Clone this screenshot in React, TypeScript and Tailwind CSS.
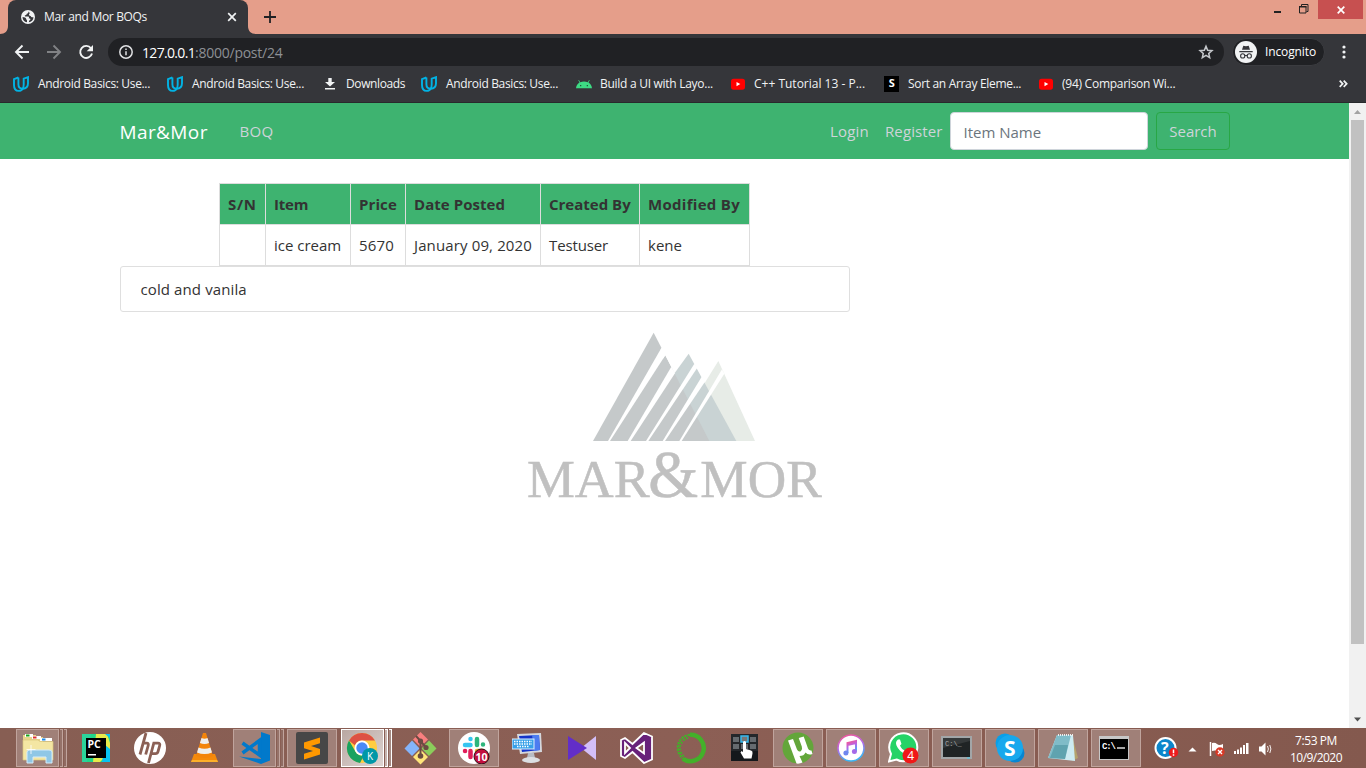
import type { ReactNode } from "react";

const Udacity = () => (
  <svg className="-ml-px" width="16" height="16" viewBox="0 0 16 16" fill="none" stroke="#02b3e4" strokeWidth="1.900">
    <path d="M5.400 1.500 1 3.200V9c0 3.700 1.800 5.900 4.600 5.900 2.200 0 3.700-1.200 4.300-2.800" />
    <path d="M5.400 1.500v6.700c0 2.900 1.500 4.500 4.200 4.500 3.400 0 5.400-2.200 5.400-5.500V1.200l-4.300 1.500v5.800c0 2.200-.4 3.500-1.100 4.200" />
  </svg>
);

const Download = () => (
  <svg width="16" height="16" viewBox="0 0 16 16" fill="#f1f3f4">
    <path d="M6.300 2h3.400v4H13L8 10.600 3 6h3.300zM3 12h10v1.600H3z" />
  </svg>
);

const Android = () => (
  <svg width="16" height="16" viewBox="0 0 16 16">
    <path d="M0 12.300c.3-2.800 1.700-4.800 3.500-5.800L2.300 4.300l.6-.3 1.300 2.200c2.300-1 5.300-1 7.600 0L13.100 4l.6.300-1.200 2.200c1.800 1 3.200 3 3.500 5.800z" fill="#3ddc84" />
    <path d="M4 9h1.300v1.300H4zM10.700 9H12v1.300h-1.300z" fill="#205c3c" />
  </svg>
);

const Youtube = () => (
  <svg width="16" height="16" viewBox="0 0 16 16">
    <rect x="1" y="2.700" width="14" height="11" rx="2.600" fill="#f00" />
    <path d="M6.500 5.900v4.400l3.800-2.200z" fill="#fff" />
  </svg>
);

const SBox = () => (
  <span className="flex h-[16px] w-[15px] items-center justify-center bg-black text-[11px] font-bold text-white">S</span>
);

const bookmarks: { icon: ReactNode; text: string; cls: string }[] = [
  { icon: <Udacity />, text: "Android Basics: Use...", cls: "w-[154px] tracking-[-0.34px]" },
  { icon: <Udacity />, text: "Android Basics: Use...", cls: "w-[154px] tracking-[-0.34px]" },
  { icon: <Download />, text: "Downloads", cls: "w-[100px] tracking-[-0.39px]" },
  { icon: <Udacity />, text: "Android Basics: Use...", cls: "w-[154px] tracking-[-0.34px]" },
  { icon: <Android />, text: "Build a UI with Layo...", cls: "w-[154px] tracking-[-0.28px]" },
  { icon: <Youtube />, text: "C++ Tutorial 13 - P...", cls: "w-[154px]" },
  { icon: <SBox />, text: "Sort an Array Eleme...", cls: "w-[154px] tracking-[-0.32px]" },
  { icon: <Youtube />, text: "(94) Comparison Wi...", cls: "w-[154px] tracking-[-0.26px]" },
];

function TitleBar() {
  return (
    <div className="flex h-[34px] shrink-0 items-start bg-[#e59e8a]">
      <svg width="8" height="34" viewBox="0 0 8 34"><path d="M8 26v8H0c5 0 8-3 8-8z" fill="#35363a" /></svg>
      <div className="flex h-[34px] w-[240px] items-center rounded-t-lg bg-[#35363a] pl-[13px] pr-[11px] text-[12px] text-[#f1f3f4]">
        <svg width="14" height="14" viewBox="0 0 14 14">
          <circle cx="7" cy="7" r="7" fill="#f1f3f4" />
          <path d="M7.600 1.500c-.3 1.400-.5 2-1.800 2.200-.2 1.200-1 1.500-2 1.500l.2 1.200h3.300c1 .3.900 1.400.2 1.800l1.500.2c.8.500.3 2-.8 2.100l-.4 1.700c2.600-.2 4.600-2.300 4.700-5-1.700.5-2.500-.3-2.800-1.300-1.300.1-2.100-.8-1.600-1.800.8-.5.900-1.200-.5-2.600zM1.500 7c1.800.1 3.500.5 3.600 1.700.1 1 .8 1 .9 1.700v1.900A5.500 5.500 0 0 1 1.500 7z" fill="#35363a" />
        </svg>
        <span className="ml-[9px] flex-1 tracking-[-0.32px]">Mar and Mor BOQs</span>
        <svg width="10" height="10" viewBox="0 0 10 10" stroke="#f1f3f4" strokeWidth="1.700"><path d="m1.200 1.200 7.600 7.600m0-7.600L1.200 8.800" /></svg>
      </div>
      <svg width="8" height="34" viewBox="0 0 8 34"><path d="M0 26v8h8c-5 0-8-3-8-8z" fill="#35363a" /></svg>
      <svg className="mt-[11px] ml-2" width="12" height="12" viewBox="0 0 12 12" stroke="#202124" strokeWidth="1.800"><path d="M6 0v12M0 6h12" /></svg>
      <div className="flex-1" />
      <svg width="60" height="20" viewBox="0 0 60 20" fill="none">
        <path d="M16 11h7v2h-7z" fill="#222" />
        <path d="M41.500 6.500h6.500v6.500h-6.500zM43.500 6V4.500h6.500v7H48.500" stroke="#222" />
        <path d="M41 6h7.500v1.500H41z" fill="#222" />
      </svg>
      <div className="mr-[3px] flex h-[19px] w-[45px] items-center justify-center bg-[#c75050]">
        <svg width="8" height="8" viewBox="0 0 8 8" stroke="#fff" strokeWidth="1.700"><path d="m.7.7 6.600 6.600m0-6.600L.7 7.300" /></svg>
      </div>
    </div>
  );
}

function Toolbar() {
  return (
    <div className="flex h-9 shrink-0 items-center bg-[#35363a]">
      <svg className="ml-[14px]" width="84" height="18" viewBox="0 0 84 18" fill="none" strokeWidth="1.900">
        <path d="M15 9H2M8.500 2.500 2 9l6.500 6.500" stroke="#f1f3f4" />
        <path d="M33 9h13M39.500 2.500 46 9l-6.500 6.500" stroke="#818285" />
        <path d="M77 5.300A6 6 0 1 0 78 10.500" stroke="#f1f3f4" />
        <path d="M79 2v6.300h-6.300z" fill="#f1f3f4" />
      </svg>
      <div className="ml-[10px] flex h-7 w-[1116px] items-center rounded-full bg-[#202124] pl-[11px] pr-[10px] text-[14px] text-white">
        <svg width="14" height="14" viewBox="0 0 14 14" fill="none" stroke="#e0e1e3" strokeWidth="1.500">
          <circle cx="7" cy="7" r="6.200" /><path d="M7 6.200v4M7 3.500V5" />
        </svg>
        <span className="ml-[9px] tracking-[-0.67px]">127.0.0.1</span>
        <span className="flex-1 tracking-[-0.25px] text-[#8d9095]">:8000/post/24</span>
        <svg width="16" height="16" viewBox="0 0 24 24" fill="none" stroke="#c4c7cb" strokeWidth="2.300"><path d="m12 3.500 2.500 5.900 6.400.6-4.800 4.200 1.400 6.300L12 17.200l-5.500 3.300 1.400-6.300L3.100 10l6.400-.6z" /></svg>
      </div>
      <div className="ml-2 flex h-7 w-[93px] items-center rounded-full border border-[#3b3c40] bg-[#202124] pl-[2px] text-[12px] tracking-[-0.12px] text-white">
        <svg width="22" height="22" viewBox="0 0 22 22">
          <circle cx="11" cy="11" r="11" fill="#f1f3f4" />
          <path d="M7 8.700 8.300 4.700l2.700.5 2.700-.5 1.300 4zM4.300 10h13.400v1.300H4.300z" fill="#35363a" />
          <g fill="none" stroke="#35363a" strokeWidth="1.100"><circle cx="7.700" cy="14.900" r="2.100" /><circle cx="14.300" cy="14.900" r="2.100" /><path d="M9.800 14.500h2.400" /></g>
        </svg>
        <span className="ml-2">Incognito</span>
      </div>
      <svg className="ml-[17px]" width="4" height="14" viewBox="0 0 4 14" fill="#f1f3f4"><circle cx="2" cy="2" r="1.600" /><circle cx="2" cy="7" r="1.600" /><circle cx="2" cy="12" r="1.600" /></svg>
    </div>
  );
}

function Bookmarks() {
  return (
    <div className="flex h-[33px] shrink-0 items-center border-b border-[#28292c] bg-[#35363a] pl-[14px] pb-[5px] text-[12px] text-[#f1f3f4]">
      {bookmarks.map((b, i) => (
        <div key={i} className={`flex shrink-0 items-center whitespace-nowrap ${b.cls}`}>
          <span className="flex w-6 items-center">{b.icon}</span>
          {b.text}
        </div>
      ))}
      <svg className="ml-[147px]" width="9" height="8" viewBox="0 0 9 8" fill="none" stroke="#f1f3f4" strokeWidth="1.700"><path d="m.7.700 3 3.100-3 3.100M4.700.700l3 3.100-3 3.100" /></svg>
    </div>
  );
}

const columns = [
  { head: "S/N", cell: "", w: "w-[46px]", ht: "tracking-[0.7px]", ct: "" },
  { head: "Item", cell: "ice cream", w: "w-[85px]", ht: "tracking-[-0.2px]", ct: "" },
  { head: "Price", cell: "5670", w: "w-[55px]", ht: "tracking-[0.1px]", ct: "tracking-[0.15px]" },
  { head: "Date Posted", cell: "January 09, 2020", w: "w-[135px]", ht: "tracking-[0.05px]", ct: "tracking-[0.13px]" },
  { head: "Created By", cell: "Testuser", w: "w-[99px]", ht: "", ct: "tracking-[-0.13px]" },
  { head: "Modified By", cell: "kene", w: "w-[110px]", ht: "tracking-[0.3px]", ct: "" },
];

function Logo() {
  return (
    <svg width="330" height="190" viewBox="0 0 990 570">
      <path d="M625 123 735 363H598L540 260z" fill="#e7ece7" />
      <path d="M536 101 679 363H411L492 162z" fill="#c9d3d4" />
      <path d="M431 38 598 363H249z" fill="#c5c9ca" />
      <path d="M454 84 466 106 300 363H294z" fill="#fff" />
      <path d="M484 140 495 160 362 363H353z" fill="#fff" />
      <path d="M553 131 562 143 415 363H408z" fill="#fff" />
      <path d="M576 169 588 181 465 363H458z" fill="#fff" />
      <path d="M636 148 643 161 515 363H508z" fill="#fff" />
      <path d="M454 84 470 80 498 150 484 140 466 106 458 118 452 90z" fill="#fff" />
      <g fill="#c0c0c0" stroke="#c0c0c0" strokeWidth="1.500" fontFamily="'Liberation Serif', serif">
        <text x="51" y="530" fontSize="158" textLength="368" lengthAdjust="spacingAndGlyphs">MAR</text>
        <text x="415" y="531" fontSize="200" textLength="150" lengthAdjust="spacingAndGlyphs">&amp;</text>
        <text x="571" y="530" fontSize="158" textLength="364" lengthAdjust="spacingAndGlyphs">MOR</text>
      </g>
    </svg>
  );
}

function Page() {
  return (
    <div className="flex h-[625px] shrink-0 bg-white">
      <main className="flex w-[1349px] flex-col text-[15px] text-[#333]">
        <nav className="flex h-14 items-center bg-[#3eb370] pl-[119.5px] text-[#ced4da]">
          <span className="w-[120px] pt-0.5 text-[19px] tracking-[0.4px] text-white">Mar&amp;Mor</span>
          <span className="w-[590.5px] tracking-[0.3px]">BOQ</span>
          <span className="w-[55px] tracking-[0.2px]">Login</span>
          <span className="w-[65px] tracking-[0.1px]">Register</span>
          <div className="flex h-[38px] w-[198px] items-center rounded border border-[#ced4da] bg-white pl-[12.5px] pt-0.5 text-[#6c757d]">Item Name</div>
          <div className="ml-2 flex h-[38px] w-[74px] items-center justify-center rounded border border-[#28a745]">Search</div>
        </nav>
        <section className="ml-[120px] mt-6 w-[730px]">
          <table className="ml-[99px] w-[531px] table-fixed border-collapse text-left leading-6">
            <thead>
              <tr className="h-[41px] bg-[#3eb370]">
                {columns.map((c) => (
                  <th key={c.head} className={`whitespace-nowrap border border-[#dddddd] pl-2 font-bold ${c.w} ${c.ht}`}>{c.head}</th>
                ))}
              </tr>
            </thead>
            <tbody>
              <tr className="h-[41px]">
                {columns.map((c) => (
                  <td key={c.head} className={`whitespace-nowrap border border-[#dddddd] pl-2 ${c.ct}`}>{c.cell}</td>
                ))}
              </tr>
            </tbody>
          </table>
          <div className="flex h-[46px] items-center rounded-[3px] border border-[#dfdfdf] pl-[19.5px] tracking-[0.11px]">cold and vanila</div>
        </section>
        <div className="ml-[510px] mt-2"><Logo /></div>
      </main>
      <aside className="flex w-[17px] flex-col items-center bg-[#f1f1f1]">
        <svg width="17" height="17" viewBox="0 0 17 17"><path d="M5 11h7L8.500 7z" fill="#a3a3a3" /></svg>
        <div className="h-[524px] w-[13px] bg-[#c1c1c1]" />
        <div className="flex-1" />
        <svg width="17" height="17" viewBox="0 0 17 17"><path d="M5 6.500h7l-3.500 4z" fill="#505050" /></svg>
      </aside>
    </div>
  );
}

const box = "border border-[#c0a49d] bg-[#a08078]";

function Stack({ bright, children }: { bright?: boolean; children: ReactNode }) {
  return bright ? (
    <div className="ml-0.5 flex h-[38px] gap-px">
      <div className="flex w-[43px] items-center justify-center border border-white bg-gradient-to-br from-[#b9a7a2] to-[#ded5d2]">{children}</div>
      <div className="w-[3px] border border-l-0 border-white bg-[#c5b4af]" />
      <div className="w-[3px] border border-l-0 border-white bg-[#a48a83]" />
    </div>
  ) : (
    <div className="ml-0.5 flex h-[38px] gap-px">
      <div className="flex w-[43px] items-center justify-center border border-[#c0a49d] bg-[#a08078]">{children}</div>
      <div className="w-[3px] border border-l-0 border-[#c0a49d] bg-[#957269]" />
      <div className="w-[3px] border border-l-0 border-[#c0a49d] bg-[#906b62]" />
    </div>
  );
}

function Slot({ children, open, narrow }: { children: ReactNode; open?: boolean; narrow?: boolean }) {
  return (
    <div className={`flex h-10 shrink-0 items-center justify-center ${narrow ? "w-[53px]" : "w-[54px]"}`}>
      <div className={`flex h-[38px] w-[50px] items-center justify-center ${open ? box : ""}`}>{children}</div>
    </div>
  );
}

function Taskbar() {
  return (
    <div className="flex h-10 shrink-0 items-center overflow-hidden bg-gradient-to-r from-[#875e53] via-[#8c5f55] to-[#84594e] pl-[15px]">
      <div className="w-[54px] shrink-0 -ml-px mr-px">
        <Stack>
          <svg width="34" height="32" viewBox="0 0 34 32">
            <path d="M2 3h13v5H2z" fill="#e8d58b" /><path d="M4 2h8v3H4z" fill="#fff" /><path d="M5 2.500h3.500v2H5z" fill="#16a316" />
            <path d="M9 5h13v5H9z" fill="#e8d58b" /><path d="M11 4h9v3h-9z" fill="#fff" /><path d="M12 4.500h3.500v2H12z" fill="#d33" />
            <path d="M2 8h15l2 1.500h13V28H2z" fill="#f4e6a3" stroke="#d9c57c" strokeWidth=".7" />
            <path d="M19 6h12v3H19z" fill="#fff" /><path d="M21 6.500h3.500v2H21z" fill="#1d8be8" />
            <path d="M6 31V20q0-2 3-2h19q3 0 3 2v11h-6v-6H12v6z" fill="#8fc7e6" stroke="#d5ecfa" />
            <path d="M10 13v9M5.500 17.500h9" stroke="#fff" strokeWidth=".8" />
          </svg>
        </Stack>
      </div>
      <Slot>
        <svg width="28" height="28" viewBox="0 0 28 28">
          <path d="M0 0h28v28H0z" fill="#21d789" /><path d="M14 0h11l3 9v9L18 28h-7z" fill="#e8ea4a" /><path d="M20 28l3-17 5 4v13zM23 0h5v4z" fill="#07c3f2" /><path d="M0 0h9L5 28H0z" fill="#2bd39b" />
          <path d="M4 4h20v20H4z" fill="#000" />
          <text x="5.500" y="14" fontSize="10.500" fontWeight="bold" fontFamily="Open Sans, sans-serif" fill="#fff">PC</text><path d="M6 20h8v1.500H6z" fill="#fff" />
        </svg>
      </Slot>
      <Slot>
        <svg width="32" height="32" viewBox="0 0 32 32">
          <circle cx="16" cy="16" r="16" fill="#fff" />
          <path d="M12 1 6 22.500M9 11.200h3.800q2 0 1.400 2.300l-2.500 9M14.500 31l5.300-19.800h4.200q2.300 0 1.700 2.300l-1.700 6.200q-.5 2-2.600 2h-3.600" fill="none" stroke="#8b6055" strokeWidth="2.800" />
        </svg>
      </Slot>
      <Slot>
        <svg width="27" height="30" viewBox="0 0 27 30">
          <path d="M3 21h21l3 8H0z" fill="#f58a0b" /><path d="M12 0h3l7 23q-8 4-17 0z" fill="#f3840b" />
          <path d="m10.500 5-1.600 5q4.600 2 9.200 0l-1.600-5q-3 1.400-6 0zM7.500 14.500 6 19.500q7.500 3 15 0l-1.500-5q-6 2.500-12 0z" fill="#eee" /><path d="M1 27h25l1 2H0z" fill="#fdb02a" />
        </svg>
      </Slot>
      <div className="w-[54px] shrink-0">
        <Stack>
          <svg width="32" height="32" viewBox="0 0 32 32"><path d="M22 0 31 3v25.500L22 32 0 24.500 22 27z" fill="#0179cb" /><path d="m3.500 11 17 12V8.500l-17 12.500" fill="none" stroke="#0179cb" strokeWidth="3.500" /></svg>
        </Stack>
      </div>
      <Slot open>
        <svg width="32" height="32" viewBox="0 0 32 32"><rect width="32" height="32" rx="2" fill="#474747" /><path d="M8 10.500 24 5.500v5.800l-9 2.800 9 2.800v5.600L8 27.500v-5.800l9-2.800-9-2.700z" fill="#ff9800" /></svg>
      </Slot>
      <div className="w-[54px] shrink-0">
        <Stack bright>
          <svg width="34" height="32" viewBox="0 0 34 32">
            <circle cx="16" cy="16" r="15" fill="#ffcd40" /><path d="M3 8.500A15 15 0 0 1 29 8.500H16a7.500 7.500 0 0 0-7 5z" fill="#dd5144" /><path d="M3 8.500 9.500 19.800A7.500 7.500 0 0 0 18 23.200L14 31A15 15 0 0 1 3 8.500z" fill="#1aa261" />
            <circle cx="16" cy="16" r="7.500" fill="#fff" /><circle cx="16" cy="16" r="5.700" fill="#4a8af5" />
            <circle cx="24" cy="24" r="8" fill="#0097a7" /><text x="21" y="28" fontSize="10" fontFamily="Open Sans, sans-serif" fill="#fff">K</text>
          </svg>
        </Stack>
      </div>
      <Slot>
        <svg width="33" height="33" viewBox="0 0 33 33">
          <path d="m16.500 0 7.500 7.500-7.500 7.500L9 7.500z" fill="#f87f7f" /><path d="m8 8.500 7.500 8L8 24 .5 16.500z" fill="#84b4fb" /><path d="m25 8.500 7.500 8L25 24l-7.500-7.500z" fill="#8bcd5b" /><path d="m16.500 17.500 7.500 7.500-7.500 7.500L9 25z" fill="#ffe57a" />
          <path d="M16.500 9v17M12 4l4.500 5 5 6" stroke="#6b4b43" strokeWidth="2" fill="none" /><g fill="#6b4b43"><circle cx="16.500" cy="9" r="2.600" /><circle cx="22" cy="15.500" r="2.600" /><circle cx="16.500" cy="24" r="2.800" /></g>
        </svg>
      </Slot>
      <Slot open>
        <svg width="32" height="32" viewBox="0 0 32 32">
          <circle cx="16" cy="16" r="16" fill="#fff" />
          <g fill="none" strokeLinecap="round" strokeWidth="4.500"><path d="M12.500 7v.1M7 13h5.500" stroke="#36c5f0" /><path d="M19 7v6M25 12.500v.1" stroke="#2eb67d" /><path d="M7 19h.1M12.500 19v6" stroke="#e01e5a" /><path d="M19 19h6" stroke="#ecb22e" /></g>
          <circle cx="23.500" cy="24.500" r="7.500" fill="#c2113f" stroke="#2c0e17" /><text x="17.500" y="28.500" fontSize="10.500" fontWeight="bold" fontFamily="Open Sans, sans-serif" fill="#fff">10</text>
        </svg>
      </Slot>
      <Slot>
        <svg width="32" height="32" viewBox="0 0 32 32">
          <path d="m5 2 24-1 1 19-22 2z" fill="#d5d8de" /><path d="m7 4 20-1 1 15-18 2z" fill="#1434c9" /><path d="m20 3 7 0 1 15-6 1z" fill="#4d7cf0" />
          <path d="M16 21h6l1 5h-8z" fill="#b8bcc4" /><ellipse cx="19" cy="28" rx="9" ry="3" fill="#dcdfe3" />
          <rect y="7" width="22" height="10" fill="#38a0e8" stroke="#e0f2ff" /><path d="M2 9.500h18M2 12h18M5 14.500h12" stroke="#fff" strokeWidth="1.500" strokeDasharray="1.500 1" />
        </svg>
      </Slot>
      <Slot><svg width="28" height="24" viewBox="0 0 28 24"><path d="M28 0v24L13 12z" fill="#d3bff8" /><path d="m0 0 19 12L0 24z" fill="#622ec8" /></svg></Slot>
      <Slot>
        <svg width="33" height="32" viewBox="0 0 33 32"><path d="M24 1 32 4.500v23L24 31 12.500 20 5 26l-4-2V8l4-2 7.500 6zM5 11v10l5-5zM24 10.500 16.500 16l7.500 5.500z" fill="#68217a" stroke="#fff" strokeWidth="1.800" fillRule="evenodd" /></svg>
      </Slot>
      <Slot>
        <svg width="33" height="32" viewBox="0 0 33 32" fill="none" stroke="#43b02a"><path d="M16 2.800a13.200 13.200 0 1 1-7 24" strokeWidth="4.500" /><path d="M16 2.800A13.200 13.200 0 0 0 9 26.500" strokeWidth="2.200" strokeDasharray="2.400 1" /><path d="M14 6A10.500 10.500 0 0 0 10 24.500" strokeWidth="2" strokeDasharray="2 1.500" /></svg>
      </Slot>
      <Slot>
        <svg width="27" height="28" viewBox="0 0 27 28"><path d="M0 0h27v27H0z" fill="#24272b" /><path d="M0 17h27v10H0z" fill="#15181c" /><g fill="#666b70"><path d="M2 3h6v5H2zM19 3h6v5h-6zM2 10h6v5H2zM19 10h6v5h-6zM10 10h7v5h-7z" /></g><path d="M10 2h7v6h-7z" fill="#777" stroke="#36baf0" strokeWidth="1.500" /><path d="M12 8q1.500-2 3 0v7l5 1.500q2 .5 1.500 3l-1 5h-7.500l-3.500-6 1-1.500 1.500 1z" fill="#fff" /></svg>
      </Slot>
      <Slot open narrow>
        <svg width="32" height="32" viewBox="0 0 32 32"><circle cx="16" cy="16" r="15.500" fill="#63a63a" /><path d="M6 8.500 11 7l4 10.500q1.500 3 4 1.500 1.800-1.300.8-4.500L16.700 6l5-1.500L26 16.500q1 2.500 3.500 2l1 3.500q-4.500 1.500-7-1.500-1.500 3.500-6 3.500l3 6.500q-3 1.500-6 1z" fill="#fff" /></svg>
      </Slot>
      <Slot open narrow>
        <svg width="28" height="28" viewBox="0 0 28 28"><defs><linearGradient id="note" x1="0" y1="0" x2=".3" y2="1"><stop stopColor="#f9558e" /><stop offset=".5" stopColor="#b766e8" /><stop offset="1" stopColor="#3bb6f5" /></linearGradient></defs><circle cx="14" cy="14" r="13" fill="#fff" stroke="url(#note)" strokeWidth="1.600" /><path d="M10.500 19V9l8.500-2v10.500M10.500 11l8.500-2" fill="none" stroke="url(#note)" strokeWidth="2" /><circle cx="8.900" cy="19" r="2.500" fill="#6f86ef" /><circle cx="17.400" cy="17.500" r="2.500" fill="#a56ae8" /></svg>
      </Slot>
      <Slot open narrow>
        <svg width="32" height="32" viewBox="0 0 32 32"><path d="M1 29.500 3 22A14 14 0 1 1 8.500 27.500z" fill="#25d366" stroke="#fff" strokeWidth="2" /><path d="M10 7.500q-3 2-1.500 6 2.500 6 9 8.500 4 1.500 5.500-2l-.3-1.500-3.500-1.500-1.500 2q-4.200-1.500-5.700-5.500l1.500-1.500L12 7.500z" fill="#fff" /><circle cx="22.500" cy="23.500" r="8" fill="#f01818" /><text x="19.300" y="28" fontSize="12" fontFamily="Open Sans, sans-serif" fill="#fff">4</text></svg>
      </Slot>
      <Slot open narrow>
        <svg width="32" height="24" viewBox="0 0 32 24"><path d="M0 0h31v23H0z" fill="#a2a6a8" /><path d="M2 2h27v19H2z" fill="#35393a" /><path d="M2 12 29 5v16H2z" fill="#202425" /><text x="4" y="10" fontSize="7" fontFamily="Liberation Mono, monospace" fill="#aaa">C:\_</text><path d="M26 22h3" stroke="#4ce" /></svg>
      </Slot>
      <Slot open narrow>
        <svg width="30" height="30" viewBox="0 0 30 30"><circle cx="10" cy="10" r="9.500" fill="#0a9fe8" /><circle cx="20" cy="20" r="9.500" fill="#0786d2" /><circle cx="15" cy="15" r="13" fill="#17a8ed" /><text x="9" y="22.500" fontSize="21" fontWeight="bold" fontFamily="Open Sans, sans-serif" fill="#fff">S</text></svg>
      </Slot>
      <Slot open narrow>
        <svg width="32" height="30" viewBox="0 0 32 30"><path d="m25 2 6 23-6 3z" fill="#b4a26c" /><path d="M10 2h16l2 26L1 25z" fill="#cdebf2" /><path d="M10 2h14l-6 24-17-1z" fill="#80bcc8" /><path d="M8 12h13l-3 14-15-1z" fill="#4a929e" opacity=".6" /><path d="M11 2h15" stroke="#eee" strokeWidth="2" strokeDasharray="1 1" /></svg>
      </Slot>
      <Slot open narrow>
        <svg className="-ml-1" width="30" height="24" viewBox="0 0 30 24"><path d="M0 0h30v24H0z" fill="#c7c7c7" /><path d="M1 3h28v20H1z" fill="#000" /><text x="3" y="13" fontSize="9" fontWeight="bold" fontFamily="Liberation Mono, monospace" fill="#fff" textLength="14">C:\</text><path d="M18 12h8" stroke="#fff" strokeWidth="1.300" /></svg>
      </Slot>
      <svg className="ml-[11px] shrink-0" width="122" height="28" viewBox="1153 734 122 28">
        <circle cx="1165.500" cy="748" r="10" fill="#0c86cb" stroke="#fff" strokeWidth="2" /><text x="1161" y="754" fontSize="16" fontWeight="bold" fontFamily="Open Sans, sans-serif" fill="#fff">?</text>
        <circle cx="1173.500" cy="752.500" r="4.700" fill="#ee1c1c" /><path d="M1173.500 749.500v3.700M1173.500 754.300v1.500" stroke="#fff" strokeWidth="1.500" />
        <path d="M1188.500 751.500h8l-4-4z" fill="#fff" />
        <path d="M1210.500 742v14" stroke="#fff" strokeWidth="1.500" /><path d="M1212 743q3-1 5 1t6 0v7q-3 1-5.500 0t-5.500 0z" fill="#fff" />
        <circle cx="1220" cy="752" r="4.700" fill="#d83a27" /><path d="m1218 750 4 4m0-4-4 4" stroke="#fff" strokeWidth="1.300" />
        <path d="M1234 751h2v3h-2zM1237 749.500h2v4.500h-2zM1240 747.500h2v6.500h-2zM1243 745h2v9h-2zM1246 743h2.500v11h-2.500z" fill="#fff" />
        <path d="M1259 746.500h2.500l4-4v13l-4-4h-2.500z" fill="#fff" /><path d="M1267.500 746q1.800 3 0 6M1269.800 745q2.200 4 0 8" stroke="#fff" strokeWidth=".9" fill="none" />
      </svg>
      <div className="ml-[9px] w-[64px] shrink-0 pt-px text-center text-[12px] leading-[17px] text-white">
        <div className="tracking-[-0.41px]">7:53 PM</div>
        <div className="tracking-[-0.53px]">10/9/2020</div>
      </div>
    </div>
  );
}

export default function App() {
  return (
    <div className="flex h-[768px] w-[1366px] flex-col overflow-hidden bg-white font-['Open_Sans',sans-serif]">
      <TitleBar />
      <Toolbar />
      <Bookmarks />
      <Page />
      <Taskbar />
    </div>
  );
}
